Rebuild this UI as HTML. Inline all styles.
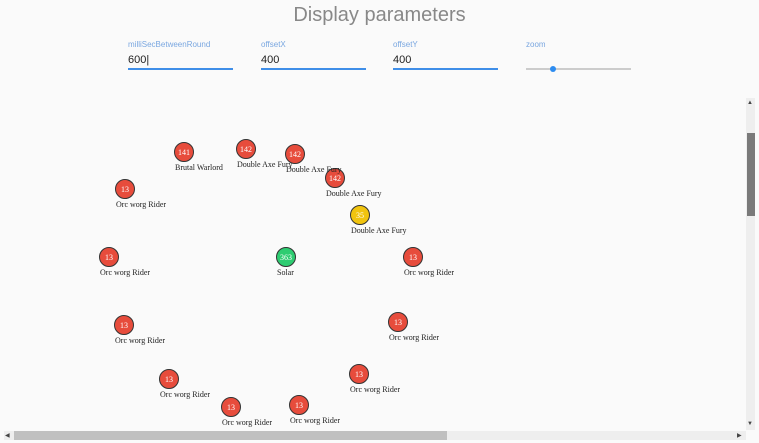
<!DOCTYPE html>
<html><head><meta charset="utf-8"><style>
html,body{margin:0;padding:0;width:759px;height:443px;overflow:hidden;background:#fafafa;font-family:"Liberation Sans",sans-serif;}
.title{position:absolute;top:1px;left:0;width:759px;text-align:center;font-size:20px;font-weight:300;color:#888;line-height:28px;}
.fld{position:absolute;top:40px;width:105px;}
.fld .l{font-size:8px;color:#7aa7e0;height:12px;}
.fld .v{font-size:11px;color:#222;height:14px;padding-top:2px;}
.fld .u{height:2px;background:#3f8ee8;margin-top:0;}
.vs{position:absolute;left:746px;top:98px;width:9px;height:332px;background:#eee;}
.vt{position:absolute;left:747px;top:133px;width:8px;height:83px;background:#7a7a7a;}
.hs{position:absolute;left:4px;top:431px;width:742px;height:9px;background:#eee;}
.ht{position:absolute;left:14px;top:431px;width:433px;height:9px;background:#c0c0c0;}
</style></head><body>
<div class="title">Display parameters</div>
<div class="fld" style="left:128px"><div class="l">milliSecBetweenRound</div><div class="v">600|</div><div class="u"></div></div>
<div class="fld" style="left:261px"><div class="l">offsetX</div><div class="v">400</div><div class="u"></div></div>
<div class="fld" style="left:393px"><div class="l">offsetY</div><div class="v">400</div><div class="u"></div></div>
<div class="fld" style="left:526px"><div class="l">zoom</div></div>
<div style="position:absolute;left:526px;top:68px;width:105px;height:2px;background:#ccc"></div>
<div style="position:absolute;left:550px;top:66px;width:6px;height:6px;border-radius:50%;background:#2d8cf0"></div>
<div class="vs"></div><div class="vt"></div>
<div style="position:absolute;left:747px;top:100px;font-size:6px;color:#444">▲</div>
<div style="position:absolute;left:747px;top:421px;font-size:6px;color:#444">▼</div>
<div class="hs"></div><div class="ht"></div>
<div style="position:absolute;left:5px;top:432px;font-size:6px;color:#444">◀</div>
<div style="position:absolute;left:737px;top:432px;font-size:6px;color:#444">▶</div>
<svg width="759" height="443" style="position:absolute;left:0;top:0" font-family="Liberation Serif,serif">
<g font-size="8" text-anchor="middle" fill="#fff">
<circle cx="184" cy="152" r="9.5" fill="#e74c3c" stroke="#333"/><text x="184" y="155">141</text>
<circle cx="246" cy="149" r="9.5" fill="#e74c3c" stroke="#333"/><text x="246" y="152">142</text>
<circle cx="295" cy="154" r="9.5" fill="#e74c3c" stroke="#333"/><text x="295" y="157">142</text>
<circle cx="335" cy="178" r="9.5" fill="#e74c3c" stroke="#333"/><text x="335" y="181">142</text>
<circle cx="360" cy="215" r="9.5" fill="#f1c40f" stroke="#333"/><text x="360" y="218">35</text>
<circle cx="125" cy="189" r="9.5" fill="#e74c3c" stroke="#333"/><text x="125" y="192">13</text>
<circle cx="286" cy="257" r="9.5" fill="#2ecc71" stroke="#333"/><text x="286" y="260">363</text>
<circle cx="109" cy="257" r="9.5" fill="#e74c3c" stroke="#333"/><text x="109" y="260">13</text>
<circle cx="413" cy="257" r="9.5" fill="#e74c3c" stroke="#333"/><text x="413" y="260">13</text>
<circle cx="124" cy="325" r="9.5" fill="#e74c3c" stroke="#333"/><text x="124" y="328">13</text>
<circle cx="398" cy="322" r="9.5" fill="#e74c3c" stroke="#333"/><text x="398" y="325">13</text>
<circle cx="169" cy="379" r="9.5" fill="#e74c3c" stroke="#333"/><text x="169" y="382">13</text>
<circle cx="359" cy="374" r="9.5" fill="#e74c3c" stroke="#333"/><text x="359" y="377">13</text>
<circle cx="231" cy="407" r="9.5" fill="#e74c3c" stroke="#333"/><text x="231" y="410">13</text>
<circle cx="299" cy="405" r="9.5" fill="#e74c3c" stroke="#333"/><text x="299" y="408">13</text>
</g>
<g font-size="8" fill="#222">
<text x="175" y="170">Brutal Warlord</text>
<text x="237" y="167">Double Axe Fury</text>
<text x="286" y="172">Double Axe Fury</text>
<text x="326" y="196">Double Axe Fury</text>
<text x="351" y="233">Double Axe Fury</text>
<text x="116" y="207">Orc worg Rider</text>
<text x="277" y="275">Solar</text>
<text x="100" y="275">Orc worg Rider</text>
<text x="404" y="275">Orc worg Rider</text>
<text x="115" y="343">Orc worg Rider</text>
<text x="389" y="340">Orc worg Rider</text>
<text x="160" y="397">Orc worg Rider</text>
<text x="350" y="392">Orc worg Rider</text>
<text x="222" y="425">Orc worg Rider</text>
<text x="290" y="423">Orc worg Rider</text>
</g>
</svg>
</body></html>
